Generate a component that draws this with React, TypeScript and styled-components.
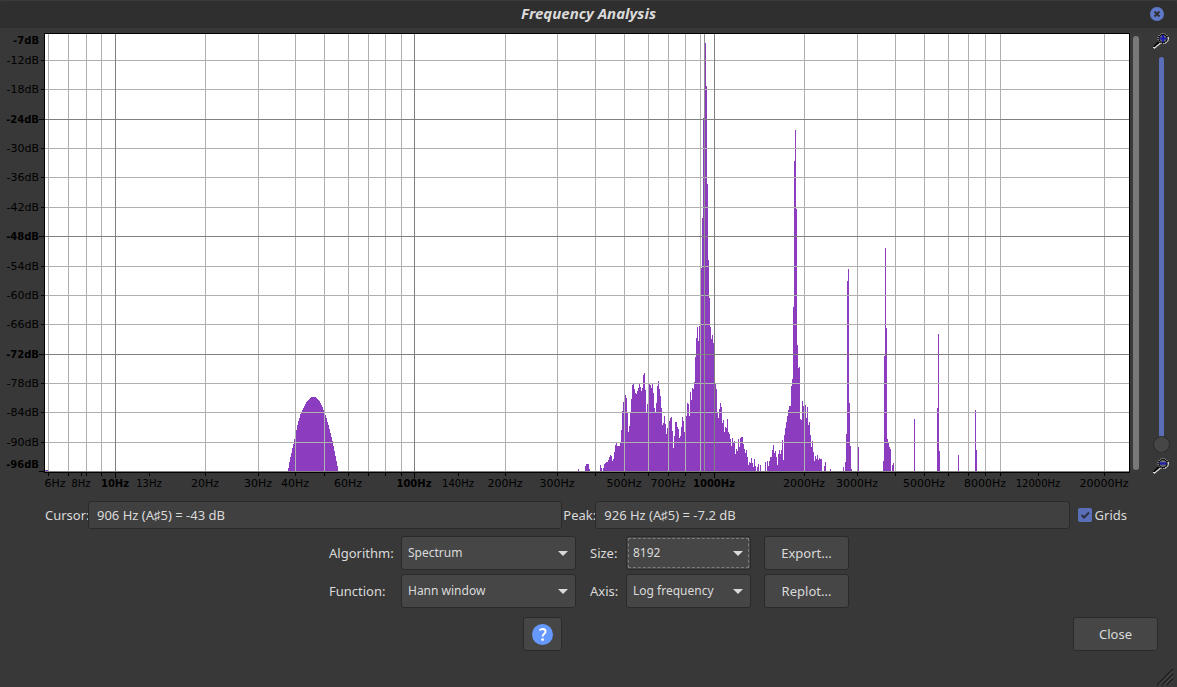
import React, { useLayoutEffect, useRef, useState } from 'react';
import styled, { createGlobalStyle } from 'styled-components';

const UI_FONT = '"Noto Sans", "Open Sans", sans-serif';
const RULER_FONT = '"DejaVu Sans", sans-serif';

const GlobalStyle = createGlobalStyle`
  *, *::before, *::after { box-sizing: border-box; }
  body { margin: 0; background: #383838; }
  button, input, select { font: inherit; color: inherit; }
`;

const Dialog = styled.main`
  position: relative;
  display: flex;
  flex-direction: column;
  min-height: 100vh;
  background: #383838;
  color: #dadada;
  font: 13px/18px ${UI_FONT};
`;

const TitleBar = styled.header`
  display: grid;
  grid-template-columns: 1fr auto 1fr;
  align-items: center;
  height: 28px;
  padding: 0 13px;
  background: #2f2f2f;
  box-shadow: inset 0 1px #3a3a3a;
  border-radius: 4px 4px 0 0;
`;

const Title = styled.h1`
  grid-column: 2;
  margin: 0;
  padding-bottom: 2px;
  font-size: 15px;
  font-weight: 700;
  font-style: italic;
`;

const CloseWindow = styled.button`
  justify-self: end;
  display: flex;
  width: 14px;
  height: 14px;
  padding: 0;
  border: 0;
  background: none;
`;

const ChartRow = styled.section`
  flex: 1 0 0;
  display: flex;
  min-height: 300px;
  margin-top: 5px;
`;

const ChartFrame = styled.div`
  flex: 1;
  min-width: 0;
  overflow: hidden;
`;

const ChartSvg = styled.svg`
  display: block;
  font-family: ${RULER_FONT};
`;

const RulerText = styled.text<{ $kind: Kind }>`
  fill: #000;
  font-size: ${p => (p.$kind === 'minor' ? 11 : 10)}px;
  font-weight: ${p => (p.$kind === 'major' ? 700 : 400)};
`;

const PanTrack = styled.div`
  width: 12px;
  margin-bottom: 22px;
  padding: 3px;
  background: #3a3a3a;
`;

const PanThumb = styled.div`
  width: 6px;
  height: 100%;
  border-radius: 3px;
  background: #797979;
`;

const ZoomColumn = styled.div`
  display: flex;
  flex-direction: column;
  align-items: center;
  gap: 4px;
  width: 35px;
  margin-bottom: 20px;
  padding-left: 4px;
`;

const ZoomSlider = styled.input`
  appearance: none;
  flex: 1;
  min-height: 0;
  width: 17px;
  margin: 3px 0 1px;
  background: none;
  writing-mode: vertical-lr;
  direction: rtl;

  &::-webkit-slider-runnable-track {
    width: 5px;
    height: 100%;
    border-radius: 3px;
    background: #5b6fb8;
  }
  &::-webkit-slider-thumb {
    appearance: none;
    width: 17px;
    height: 17px;
    margin-left: -6px;
    border: 1px solid #282828;
    border-radius: 50%;
    background: #464646;
  }
`;

const ReadoutRow = styled.section`
  display: flex;
  align-items: center;
  margin-top: 6px;
  padding: 0 50px 0 45px;
`;

const ReadoutLabel = styled.label<{ $width: number }>`
  flex: none;
  width: ${p => p.$width}px;
  white-space: nowrap;
`;

const Readout = styled.input`
  flex: 1;
  min-width: 0;
  height: 28px;
  margin-right: 1px;
  padding: 0 8px;
  border: 1px solid #2a2a2a;
  border-radius: 3px;
  background: #404040;
`;

const GridsLabel = styled.label`
  display: flex;
  align-items: center;
  gap: 3px;
  margin-left: 7px;
`;

const CheckStack = styled.span`
  display: grid;
  > * { grid-area: 1 / 1; }
  svg { pointer-events: none; }
`;

const Check = styled.input`
  appearance: none;
  width: 14px;
  height: 14px;
  margin: 0;
  border-radius: 2px;
  background: #4a4a4a;
  &:checked { background: #5b6fb8; }
  &:not(:checked) + svg { display: none; }
`;

const Options = styled.section`
  display: grid;
  grid-template-columns: 72px 175px 50px 125px 98px;
  gap: 4px 0;
  justify-content: center;
  align-items: center;
  margin-top: 7px;
  padding-left: 1px;

  > :nth-child(5n + 3) { margin-left: 14px; }
  > :nth-child(5n) { margin-left: 13px; }
`;

const Picker = styled.span`
  display: grid;
  align-items: center;
  > * { grid-area: 1 / 1; }
  svg { justify-self: end; margin-right: 8px; pointer-events: none; }
`;

const Select = styled.select<{ $focused?: boolean }>`
  appearance: none;
  width: 100%;
  height: 34px;
  padding: 0 24px 0 6px;
  border: 1px solid #2a2a2a;
  border-radius: 3px;
  background: #464646;
  font-size: 12px;
  outline: ${p => (p.$focused ? '1px dashed #7c7c7c' : 'none')};
  outline-offset: -3px;
`;

const Button = styled.button<{ $width: number }>`
  display: flex;
  align-items: center;
  justify-content: center;
  width: ${p => p.$width}px;
  height: 34px;
  padding: 0;
  border: 1px solid #2a2a2a;
  border-radius: 3px;
  background: #464646;
`;

const Footer = styled.footer`
  display: flex;
  margin-top: 9px;
  padding: 0 19px 36px 12px;
`;

const HelpArea = styled.div`
  flex: 1;
  display: flex;
  justify-content: center;
`;

const Grip = styled.svg`
  position: absolute;
  right: 3px;
  bottom: 1px;
`;

type Kind = 'major' | 'minor' | 'small';

/* The spectrum at its base size; every x and y below is measured in it. */
const BASE_WIDTH = 1084;
const BASE_HEIGHT = 437;
const LEFT = 45;
const TOP = 1;
const BOTTOM_RULER = 24;

/* Runs of neighbouring columns: first column, then the top of each. */
const RUNS: [number, number[]][] = [
  [0, [436, 436, 436]],
  [243, [434, 428, 423, 419, 414, 410, 405, 398, 396, 391, 387, 384, 380, 378, 376, 374, 372, 370, 368,
    367, 366, 365, 364, 363, 363, 363, 363, 363, 364, 365, 366, 367, 369, 371, 373, 376, 379, 381, 384, 388,
    391, 395, 399, 403, 407, 412, 417, 422, 427, 432]],
  [533, [435]],
  [540, [432, 430, 430, 430, 435]],
  [555, [431, 434]],
  [558, [434, 430, 429, 428, 428, 426, 423, 421, 422, 427, 425, 418, 411, 409, 412, 412, 412, 409, 396, 377,
    368, 366, 361, 364, 379, 398, 392, 379, 365, 351, 350, 355, 359, 360, 357, 354, 350, 353, 357, 354, 341,
    339, 356, 379, 370, 356, 350, 351, 354, 350, 359, 374, 379, 369, 352, 347, 355, 362, 374, 391, 389, 382,
    390, 400, 394, 392, 387, 384, 383, 397, 414, 402, 388, 388, 393, 395, 404, 402, 393, 383, 387, 398, 398,
    382, 369, 370, 382, 358, 366, 354, 355, 348, 323, 304, 293, 307, 292, 290, 234, 184, 84, 84, 9, 52, 150,
    226, 264, 293, 305, 301, 309, 320, 349, 355, 378, 384, 375, 369, 373, 389, 386, 398, 393, 394, 385, 398,
    400, 405, 412, 404, 408, 407, 420, 415, 417, 405, 413, 404, 403, 403, 410, 415, 419, 416, 423, 431, 428,
    429, 424, 429, 433, 425, 432]],
  [712, [433, 430]],
  [715, [431]],
  [720, [428]],
  [722, [427, 432, 427, 423, 423, 416, 411, 419, 417, 423, 431, 420, 416, 420, 416, 406, 426, 401, 394, 388,
    382, 376, 372, 372, 352, 345, 273, 127, 96, 175, 311, 334, 333, 385, 386, 367, 372, 372, 371, 384, 373,
    391, 388, 401, 413, 407, 418, 427, 422, 425, 421, 426, 424, 425, 425]],
  [779, [432, 428]],
  [785, [435]],
  [798, [433]],
  [800, [428, 400, 247, 235, 369, 412, 435]],
  [813, [413]],
  [838, [427, 322, 214, 294, 405, 409, 413, 415]],
  [847, [431, 429]],
  [869, [385]],
  [892, [374, 300, 417]],
  [913, [421]],
  [930, [376, 416]],
];

const DB_LINES: [string, number, boolean][] = [
  ['-12dB', 26, false], ['-18dB', 55, false], ['-24dB', 85, true], ['-30dB', 114, false],
  ['-36dB', 143, false], ['-42dB', 173, false], ['-48dB', 202, true], ['-54dB', 232, false],
  ['-60dB', 261, false], ['-66dB', 290, false], ['-72dB', 320, true], ['-78dB', 349, false],
  ['-84dB', 378, false], ['-90dB', 408, false],
];

const HZ_GRID = [3, 23, 41, 56, 160, 213, 250, 279, 303, 323, 340, 356, 460, 512, 550, 579, 603, 623,
  640, 655, 759, 812, 850, 879, 903, 923, 940, 955, 1059];
const HZ_DECADES = [70, 369, 669];
const CURSOR_X = 659;

const HZ_LABELS: [string, number, Kind][] = [
  ['6Hz', 10, 'minor'], ['8Hz', 36, 'small'], ['10Hz', 70, 'major'], ['13Hz', 104, 'small'],
  ['20Hz', 160, 'minor'], ['30Hz', 213, 'minor'], ['40Hz', 250, 'minor'], ['60Hz', 303, 'minor'],
  ['100Hz', 369, 'major'], ['140Hz', 413, 'small'], ['200Hz', 460, 'minor'], ['300Hz', 512, 'minor'],
  ['500Hz', 579, 'minor'], ['700Hz', 623, 'minor'], ['1000Hz', 669, 'major'], ['2000Hz', 759, 'minor'],
  ['3000Hz', 812, 'minor'], ['5000Hz', 879, 'minor'], ['8000Hz', 940, 'minor'],
  ['12000Hz', 993, 'small'], ['20000Hz', 1059, 'minor'],
];

function SpectrumChart({ grids }: { grids: boolean }) {
  const frame = useRef<HTMLDivElement>(null);
  const [size, setSize] = useState({ width: 1130, height: 462 });

  useLayoutEffect(() => {
    const el = frame.current;
    if (!el) return;
    const measure = () => setSize({ width: el.clientWidth, height: el.clientHeight });
    measure();
    const observer = new ResizeObserver(measure);
    observer.observe(el);
    return () => observer.disconnect();
  }, []);

  const plotW = size.width - LEFT - 1;
  const plotH = size.height - TOP - BOTTOM_RULER;
  const px = (x: number) => LEFT + Math.round((x * plotW) / BASE_WIDTH);
  const py = (y: number) => TOP + Math.round((y * plotH) / BASE_HEIGHT);
  const floor = TOP + plotH;
  const right = LEFT + plotW;

  const spectrum = RUNS.map(([start, tops]) => {
    const steps = tops.map((top, i) => `V${py(top)}H${px(start + i + 1)}`).join('');
    return `M${px(start)} ${floor}${steps}V${floor}Z`;
  }).join('');

  return (
    <ChartFrame ref={frame}>
      <ChartSvg width={size.width} height={size.height} shapeRendering="crispEdges" role="img" aria-label="Spectrum">
        <rect x={LEFT - 1} y={0} width={plotW + 2} height={plotH + 3} fill="#000" />
        <rect x={LEFT} y={TOP} width={plotW} height={plotH} fill="#fff" />
        <path d={spectrum} fill="#8c3cbe" />
        {grids && (
          <g>
            {HZ_GRID.map(x => <rect key={x} x={px(x)} y={TOP} width={1} height={plotH} fill="#b0b0b0" />)}
            {DB_LINES.map(([label, y, major]) => (
              <rect key={label} x={LEFT} y={py(y)} width={plotW} height={1} fill={major ? '#808080' : '#b0b0b0'} />
            ))}
            {HZ_DECADES.map(x => <rect key={x} x={px(x)} y={TOP} width={1} height={plotH} fill="#808080" />)}
          </g>
        )}
        <rect x={px(CURSOR_X)} y={TOP} width={1} height={plotH} fill="#909090" />
        <rect x={LEFT} y={floor} width={plotW} height={1} fill="#808080" />

        <RulerText $kind="major" x={39} y={11} textAnchor="end">-7dB</RulerText>
        {DB_LINES.map(([label, y, major]) => (
          <g key={label}>
            <rect x={major ? 39 : 41} y={py(y)} width={major ? 5 : 3} height={1} />
            <RulerText $kind={major ? 'major' : 'minor'} x={39} y={py(y) + 4} textAnchor="end">{label}</RulerText>
          </g>
        ))}
        <rect x={39} y={floor} width={5} height={1} />
        <RulerText $kind="major" x={39} y={floor - 3} textAnchor="end">-96dB</RulerText>

        {HZ_GRID.map(x => <rect key={x} x={px(x)} y={floor + 2} width={1} height={3} />)}
        {HZ_DECADES.map(x => <rect key={x} x={px(x)} y={floor + 2} width={1} height={5} />)}
        {HZ_LABELS.map(([label, x, kind]) => (
          <g key={label}>
            {kind === 'small' && <rect x={px(x)} y={floor + 2} width={1} height={3} />}
            <RulerText $kind={kind} x={px(x)} y={floor + 16} textAnchor="middle">{label}</RulerText>
          </g>
        ))}
        <rect x={right} y={0} width={1} height={plotH + 3} />
      </ChartSvg>
    </ChartFrame>
  );
}

function Magnifier({ zoomIn }: { zoomIn?: boolean }) {
  return (
    <svg width="17" height="17" viewBox="0 0 17 17" aria-hidden="true">
      <path d="M1 14.5 7 8.5" stroke="#000" strokeWidth="2.6" />
      <path d="M1 15.5 7.5 10" stroke="#d8d8d8" strokeWidth="1.4" />
      <path d="M0 14.5H2" stroke="#d8d8d8" strokeWidth="1" />
      <circle cx="10" cy="5.5" r="4.3" fill="#6a6a70" stroke="#000" strokeWidth="1.6" />
      <circle cx="10" cy="5.5" r="4.9" fill="none" stroke="#fff" strokeWidth="1" strokeDasharray="1 1.2" />
      <path d="M11.5 10.5C14.5 9.6 16 7.5 15.5 4" fill="none" stroke="#d0d0d0" strokeWidth="1" />
      <path d={zoomIn ? 'M6.5 5.5H13.5M10 2V9' : 'M6.5 5.5H13.5'} stroke="#1c1cb0" strokeWidth="2.2" />
    </svg>
  );
}

function Dropdown({ id, value, focused }: { id: string; value: string; focused?: boolean }) {
  return (
    <Picker>
      <Select id={id} defaultValue={value} $focused={focused}>
        <option>{value}</option>
      </Select>
      <svg width="10" height="5" viewBox="0 0 10 5" aria-hidden="true"><path d="M0 0H10L5 5Z" fill="#dadada" /></svg>
    </Picker>
  );
}

export default function App() {
  const [grids, setGrids] = useState(true);

  return (
    <>
      <GlobalStyle />
      <Dialog>
        <TitleBar>
          <Title>Frequency Analysis</Title>
          <CloseWindow aria-label="Close window">
            <svg width="14" height="14" viewBox="0 0 14 14">
              <circle cx="7" cy="7" r="7" fill="#5f78c8" />
              <path d="M4.5 4.5 9.5 9.5M9.5 4.5 4.5 9.5" stroke="#2f2f2f" strokeWidth="1.8" />
            </svg>
          </CloseWindow>
        </TitleBar>

        <ChartRow>
          <SpectrumChart grids={grids} />
          <PanTrack role="scrollbar" aria-label="Pan" aria-orientation="vertical" aria-valuenow={0}>
            <PanThumb />
          </PanTrack>
          <ZoomColumn>
            <Magnifier zoomIn />
            <ZoomSlider type="range" min={1} max={100} defaultValue={1} aria-label="Zoom" />
            <Magnifier />
          </ZoomColumn>
        </ChartRow>

        <ReadoutRow>
          <ReadoutLabel htmlFor="cursor" $width={43}>Cursor:</ReadoutLabel>
          <Readout id="cursor" readOnly value="906 Hz (A♯5) = -43 dB" />
          <ReadoutLabel htmlFor="peak" $width={32}>Peak:</ReadoutLabel>
          <Readout id="peak" readOnly value="926 Hz (A♯5) = -7.2 dB" />
          <GridsLabel>
            <CheckStack>
              <Check type="checkbox" checked={grids} onChange={e => setGrids(e.target.checked)} />
              <svg width="14" height="14" viewBox="0 0 14 14" aria-hidden="true">
                <path d="M3.5 7 6 9.5 11 4.5" fill="none" stroke="#2b2f42" strokeWidth="2" />
              </svg>
            </CheckStack>
            Grids
          </GridsLabel>
        </ReadoutRow>

        <Options>
          <label htmlFor="algorithm">Algorithm:</label>
          <Dropdown id="algorithm" value="Spectrum" />
          <label htmlFor="size">Size:</label>
          <Dropdown id="size" value="8192" focused />
          <Button $width={85}>Export...</Button>
          <label htmlFor="function">Function:</label>
          <Dropdown id="function" value="Hann window" />
          <label htmlFor="axis">Axis:</label>
          <Dropdown id="axis" value="Log frequency" />
          <Button $width={85}>Replot...</Button>
        </Options>

        <Footer>
          <HelpArea>
            <Button $width={39} aria-label="Help">
              <svg width="21" height="21" viewBox="0 0 21 21" aria-hidden="true">
                <circle cx="10.5" cy="10.5" r="10.5" fill="#6699ff" />
                <path d="M7.5 6.2C8.6 5.2 9.6 4.9 10.7 4.9 12.5 4.9 13.6 5.9 13.6 7.4 13.6 9.7 10.7 9.9 10.7 12.6" fill="none" stroke="#fff" strokeWidth="2" />
                <circle cx="10.6" cy="15.6" r="1.4" fill="#fff" />
              </svg>
            </Button>
          </HelpArea>
          <Button $width={85}>Close</Button>
        </Footer>

        <Grip width="18" height="18" viewBox="0 0 18 18" aria-hidden="true">
          <path d="M1 17 17 1M6 17 17 6M11 17 17 11" stroke="#1f1f1f" strokeWidth="1.4" />
          <path d="M3 17 17 3M8 17 17 8M13 17 17 13" stroke="#4c4c4c" strokeWidth="1" />
        </Grip>
      </Dialog>
    </>
  );
}
